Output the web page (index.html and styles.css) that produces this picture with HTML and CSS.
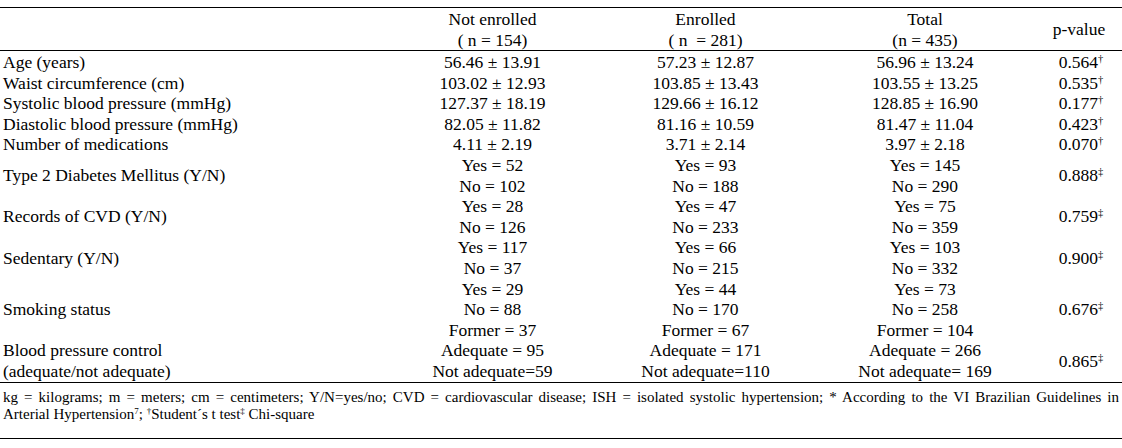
FILE: index.html
```html
<!DOCTYPE html>
<html lang="en">
<head>
<meta charset="utf-8">
<title>Table</title>
<link rel="stylesheet" href="styles.css">
</head>
<body>
<div class="page">
<table class="data">
  <colgroup>
    <col class="c-label"><col class="c-ne"><col class="c-en"><col class="c-tot"><col class="c-p">
  </colgroup>
  <thead>
    <tr>
      <th class="lab"></th>
      <th>Not enrolled<br>( n = 154)</th>
      <th>Enrolled<br>( n &nbsp;= 281)</th>
      <th>Total<br>(n = 435)</th>
      <th>p-value</th>
    </tr>
  </thead>
  <tbody>
    <tr class="first"><td class="lab">Age (years)</td><td>56.46 ± 13.91</td><td>57.23 ± 12.87</td><td>56.96 ± 13.24</td><td>0.564<sup>†</sup></td></tr>
    <tr><td class="lab">Waist circumference (cm)</td><td>103.02 ± 12.93</td><td>103.85 ± 13.43</td><td>103.55 ± 13.25</td><td>0.535<sup>†</sup></td></tr>
    <tr><td class="lab">Systolic blood pressure (mmHg)</td><td>127.37 ± 18.19</td><td>129.66 ± 16.12</td><td>128.85 ± 16.90</td><td>0.177<sup>†</sup></td></tr>
    <tr><td class="lab">Diastolic blood pressure (mmHg)</td><td>82.05 ± 11.82</td><td>81.16 ± 10.59</td><td>81.47 ± 11.04</td><td>0.423<sup>†</sup></td></tr>
    <tr><td class="lab">Number of medications</td><td>4.11 ± 2.19</td><td>3.71 ± 2.14</td><td>3.97 ± 2.18</td><td>0.070<sup>†</sup></td></tr>
    <tr><td class="lab">Type 2 Diabetes Mellitus (Y/N)</td><td>Yes = 52<br>No = 102</td><td>Yes = 93<br>No = 188</td><td>Yes = 145<br>No = 290</td><td>0.888<sup>‡</sup></td></tr>
    <tr><td class="lab">Records of CVD (Y/N)</td><td>Yes = 28<br>No = 126</td><td>Yes = 47<br>No = 233</td><td>Yes = 75<br>No = 359</td><td>0.759<sup>‡</sup></td></tr>
    <tr><td class="lab">Sedentary (Y/N)</td><td>Yes = 117<br>No = 37</td><td>Yes = 66<br>No = 215</td><td>Yes = 103<br>No = 332</td><td>0.900<sup>‡</sup></td></tr>
    <tr><td class="lab">Smoking status</td><td>Yes = 29<br>No = 88<br>Former = 37</td><td>Yes = 44<br>No = 170<br>Former = 67</td><td>Yes = 73<br>No = 258<br>Former = 104</td><td>0.676<sup>‡</sup></td></tr>
    <tr class="last"><td class="lab">Blood pressure control<br>(adequate/not adequate)</td><td>Adequate = 95<br>Not adequate=59</td><td>Adequate = 171<br>Not adequate=110</td><td>Adequate = 266<br>Not adequate= 169</td><td>0.865<sup>‡</sup></td></tr>
  </tbody>
</table>
<div class="notes">
  <span class="note-line">kg = kilograms; m = meters; cm = centimeters; Y/N=yes/no; CVD = cardiovascular disease; ISH = isolated systolic hypertension; * According to the VI Brazilian Guidelines in</span>
  <span class="note-last">Arterial Hypertension<sup>7</sup>; <sup>†</sup>Student´s t test<sup>‡</sup> Chi-square</span>
</div>
</div>
</body>
</html>
```
FILE: styles.css
```css
html, body {
  margin: 0;
  padding: 0;
  background: #fff;
}
body {
  font-family: "Liberation Serif", "Times New Roman", serif;
  color: #000;
}
.page {
  width: 1122px;
  padding-top: 7px;
}
.data {
  width: 1122px;
  border-collapse: collapse;
  table-layout: fixed;
  border-top: 1px solid #000;
  border-bottom: 1px solid #000;
  font-size: 17.5px;
}
.c-label { width: 388px; }
.c-ne { width: 209px; }
.c-en { width: 217px; }
.c-tot { width: 222px; }
.c-p { width: 86px; }
.data th {
  font-weight: normal;
  text-align: center;
  vertical-align: middle;
  line-height: 20.5px;
  padding: 1px 0 0;
  border-bottom: 1px solid #000;
}
.data td {
  text-align: center;
  vertical-align: middle;
  line-height: 20.6px;
  padding: 0;
  white-space: nowrap;
}
.data tr.first td { padding-top: 1px; }
.data td.lab {
  text-align: left;
  padding-left: 3px;
}
.data td:last-child { padding-left: 4px; }
sup {
  font-size: 0.6em;
  line-height: 0;
  vertical-align: 0.55em;
}
.notes {
  font-size: 15px;
  line-height: 17px;
  padding: 6px 3px 0;
  height: 49px;
  border-bottom: 1px solid #000;
  text-align: justify;
}
.note-line {
  display: block;
  text-align-last: justify;
  white-space: nowrap;
}
.note-last { display: block; }
```
